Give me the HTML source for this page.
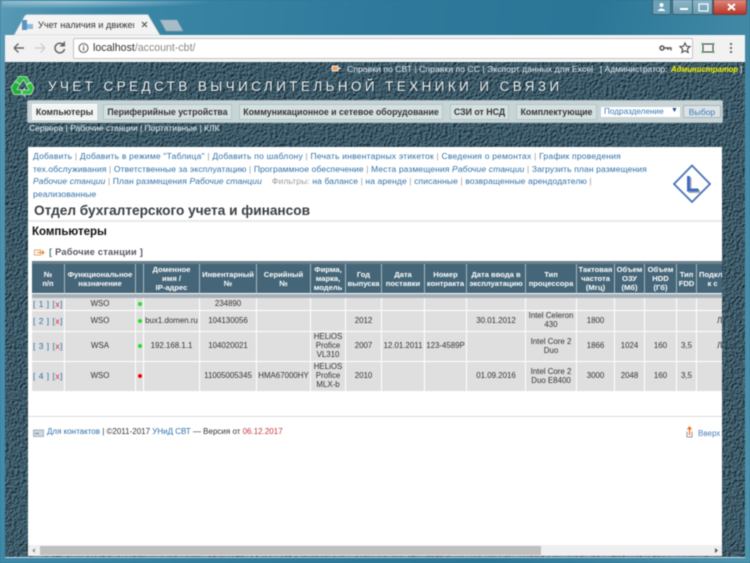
<!DOCTYPE html>
<html><head><meta charset="utf-8"><style>
html,body{margin:0;padding:0;width:750px;height:563px;overflow:hidden;background:#2b6d8c}
*{box-sizing:border-box}
#r{position:absolute;left:0;top:0;width:750px;height:563px;overflow:hidden;font-family:"Liberation Sans",sans-serif;filter:blur(.4px)}
.a{position:absolute;white-space:nowrap}
.l{color:#2f70a8}.s{color:#999}
table{border-collapse:separate;border-spacing:0;table-layout:fixed;position:absolute;left:32px;top:261px;width:690px;font-size:7.9px;color:#333;text-align:center}
td,th{padding:0;overflow:hidden;border-right:1px solid #fff;border-bottom:1px solid #fff;line-height:8.8px;white-space:nowrap}
td{background:#dfdfdf}
td:first-child{font-size:8.500px;letter-spacing:.5px}
th{background:#456678;color:#fff;font-weight:bold;font-size:7.6px;height:30px;line-height:9px;border-right:1px solid #a8b8c0}
.st td{background:#6b7f8c;height:3px;border:0;line-height:0;font-size:0}
.dot{display:inline-block;width:4px;height:4px;border-radius:50%}
.btn{position:absolute;top:104px;height:16px;background:#d6e0e0;border:1px solid #a9c8c8;font:bold 8.8px/14px "Liberation Sans",sans-serif;color:#333;text-align:center;white-space:nowrap}
</style></head><body><div id="r">
<div class="a" style="left:0;top:0;width:750px;height:563px;background:linear-gradient(100deg,#5a9ab5 0%,#3d88a8 12%,#2f7a9c 45%,#2b7697 70%,#4f94ae 100%)"></div>
<div class="a" style="left:2px;top:1px;width:746px;height:36px;background:radial-gradient(ellipse at 60px 0,#a9cbd8,transparent 150px)"></div>

<svg class="a" style="left:0;top:0" width="750" height="40">
<path d="M14 35 L24 17 Q25 14.500 28 14.500 L148 14.500 L160 35 Z" fill="#f3f3f3" stroke="#9fb4bd" stroke-width=".6"/>
<path d="M160 20 L177 20 L183 31 L166 31 Z" fill="#a8bcc8" stroke="#8ba2ae" stroke-width=".5"/>
<rect x="22" y="20" width="5" height="10" fill="#5b94bf"/><rect x="27" y="24" width="6" height="5" fill="#8ebbd9"/>
<path d="M142 22l5 5m0-5l-5 5" stroke="#555" stroke-width="1.200"/>
</svg>
<div class="a" style="left:38px;top:19px;font-size:9.200px;line-height:12px;color:#333;width:96px;overflow:hidden">Учет наличия и движен</div>

<div class="a" style="left:652px;top:0;width:19px;height:15px;background:#6ba0b5;border:1px solid #3c5f70;border-top:0;border-radius:0 0 3px 3px"></div>
<div class="a" style="left:672px;top:0;width:21px;height:15px;background:linear-gradient(#8fb8c8,#6a9cb0);border:1px solid #3c5f70;border-top:0;border-radius:0 0 0 3px"></div>
<div class="a" style="left:693px;top:0;width:20px;height:15px;background:linear-gradient(#8fb8c8,#6a9cb0);border:1px solid #3c5f70;border-width:0 1px 1px 0"></div>
<div class="a" style="left:713px;top:0;width:34px;height:15px;background:linear-gradient(#e0867a,#b8362b);border:1px solid #7a3a3a;border-top:0;border-radius:0 0 3px 0"></div>
<svg class="a" style="left:652px;top:0" width="96" height="15">
<circle cx="9.500" cy="5" r="2" fill="#fff"/><path d="M5.500 11q4-5 8 0z" fill="#fff"/>
<rect x="28" y="8" width="8" height="2" fill="#fff"/>
<rect x="47" y="4" width="9" height="7" fill="none" stroke="#fff" stroke-width="1.200"/>
<path d="M76 4l7 6m0-6l-7 6" stroke="#fff" stroke-width="2"/>
</svg>

<div class="a" style="left:5px;top:35px;width:740px;height:27px;background:#f2f2f2"></div>
<div class="a" style="left:73px;top:38px;width:620px;height:21px;background:#fff;border:1px solid #c4c4c4;border-radius:2px"></div>
<svg class="a" style="left:5px;top:35px" width="740" height="27">
<path d="M9 13H19M9 13l4.500-4.500M9 13l4.500 4.500" fill="none" stroke="#666" stroke-width="1.400"/>
<path d="M40 13H30M40 13l-4.500-4.500M40 13l-4.500 4.500" fill="none" stroke="#cfcfcf" stroke-width="1.400"/>
<path d="M58.500 10a4.800 4.800 0 1 0 1 4" fill="none" stroke="#666" stroke-width="1.500"/><path d="M60 6v5.500h-5.500z" fill="#666"/>
<circle cx="78.500" cy="13" r="4.500" fill="none" stroke="#666" stroke-width="1.100"/><rect x="78" y="12" width="1.200" height="3.500" fill="#666"/><rect x="78" y="10" width="1.200" height="1.200" fill="#666"/>
<circle cx="657" cy="13" r="2" fill="none" stroke="#555" stroke-width="1.500"/><path d="M659 13h7v2.500M663 13v2" fill="none" stroke="#555" stroke-width="1.400"/>
<path d="M680 8l1.500 3.200 3.500.4-2.600 2.400.7 3.500-3.100-1.800-3.100 1.800.7-3.500-2.600-2.400 3.500-.4z" fill="none" stroke="#555" stroke-width="1.200"/>
<rect x="698" y="9" width="10" height="8" fill="none" stroke="#444" stroke-width="1.100"/>
<path d="M696.500 8h2v2h-2zM707.500 8h2v2h-2zM696.500 16h2v2h-2zM707.500 16h2v2h-2z" fill="#4caf50"/>
<path d="M725 8h2v2h-2zM725 12h2v2h-2zM725 16h2v2h-2z" fill="#666"/>
</svg>
<div class="a" style="left:93px;top:41px;font-size:10.600px;line-height:14px;color:#333">localhost<span style="color:#888">/account-cbt/</span></div>

<svg class="a" style="left:5px;top:62px" width="740" height="496">
<filter id="t" x="0" y="0" width="100%" height="100%" color-interpolation-filters="sRGB"><feTurbulence type="fractalNoise" baseFrequency=".36" numOctaves="3" seed="4"/><feDiffuseLighting surfaceScale="1.400" lighting-color="#567f93" diffuseConstant=".95"><feDistantLight azimuth="225" elevation="52"/></feDiffuseLighting></filter>
<rect width="740" height="496" filter="url(#t)"/>
</svg>
<div class="a" style="left:5px;top:557px;width:740px;height:1px;background:#c9dbe2"></div>

<svg class="a" style="left:331px;top:65px" width="11" height="8"><rect x="1" y="1" width="6" height="5" fill="#f0a060" stroke="#fff" stroke-width=".8"/><path d="M7 3.500h3" stroke="#fff"/></svg>
<div class="a" style="left:347px;top:64px;font-size:8.700px;line-height:11px;color:#e6eef2">Справки по СВТ | Справки по СС | Экспорт данных для Excel</div>
<div class="a" style="left:600px;top:64px;font-size:8.400px;line-height:11px;color:#e6eef2">[ Администратор:</div>
<div class="a" style="left:671px;top:64px;font-size:7.800px;line-height:11px;color:#f4f400;font-weight:bold;font-style:italic">Администратор</div>
<div class="a" style="left:740px;top:64px;font-size:8.400px;line-height:11px;color:#e6eef2">]</div>

<svg class="a" style="left:9px;top:74px" width="27" height="25" viewBox="0 0 27 25">
<path d="M9.500 2.500h8l3.500 6-3.500 2-3-5-3 5-5-2.500z" fill="#2fc04a" stroke="#d8f0d8" stroke-width=".7"/>
<path d="M2 14l4-6.500 5 2.500-3 5.500h4.500v5H5z" fill="#1fb03a" stroke="#d8f0d8" stroke-width=".7"/>
<path d="M25 14l-3-5.500-5 2.500 3 5h-4.500v-2l-3 4.500 3 4v-2H22z" fill="#2fc04a" stroke="#d8f0d8" stroke-width=".7"/>
</svg>

<div class="a" style="left:48px;top:78px;font-size:13.500px;line-height:18px;letter-spacing:3.400px;color:#eef0f0;text-shadow:1px 1px 0 #1d3442">УЧЕТ СРЕДСТВ ВЫЧИСЛИТЕЛЬНОЙ ТЕХНИКИ И СВЯЗИ</div>

<div class="a" style="left:27px;top:100px;width:696px;height:23px;background:#c9d4d6;border:1px solid #aebcc0;border-radius:2px"></div>
<div class="btn" style="left:32px;width:65px;background:#f2f4f4;border-color:#fff">Компьютеры</div>
<div class="btn" style="left:103px;width:129px">Периферийные устройства</div>
<div class="btn" style="left:239px;width:204px">Коммуникационное и сетевое оборудование</div>
<div class="btn" style="left:450px;width:59px">СЗИ от НСД</div>
<div class="btn" style="left:516px;width:81px">Комплектующие</div>
<div class="a" style="left:601px;top:107px;width:79px;height:10px;background:#fff;font-size:8.200px;line-height:10px;color:#3a7ab8;padding-left:3px">Подразделение<span style="position:absolute;left:70px;top:-1px;font-size:7px;color:#234f9a">▼</span></div>
<div class="a" style="left:683px;top:105px;width:38px;height:13px;background:#dce3e6;border:1px solid #a8b4ba;border-radius:2px;font-size:8.600px;line-height:12px;text-align:center;color:#3a7ab8">Выбор</div>
<div class="a" style="left:29px;top:122px;font-size:8.500px;line-height:12px;color:#eef4f6">Сервера | Рабочие станции | Портативные | КЛК</div>

<div class="a" style="left:28px;top:147px;width:694px;height:398px;background:#fff"></div>
<div class="a" style="left:33px;top:150px;font-size:8.500px;line-height:12.500px;letter-spacing:.12px;color:#999"><span style="letter-spacing:.22px"><span class="l">Добавить</span> | <span class="l">Добавить в режиме "Таблица"</span> | <span class="l">Добавить по шаблону</span> | <span class="l">Печать инвентарных этикеток</span> | <span class="l">Сведения о ремонтах</span> | <span class="l">График проведения</span></span><br>
<span class="l">тех.обслуживания</span> | <span class="l">Ответственные за эксплуатацию</span> | <span class="l">Программное обеспечение</span> | <span class="l">Места размещения <i>Рабочие станции</i></span> | <span class="l">Загрузить план размещения</span><br>
<span class="l"><i>Рабочие станции</i></span> | <span class="l">План размещения <i>Рабочие станции</i></span> &nbsp; &nbsp;Фильтры: <span class="l">на балансе</span> | <span class="l">на аренде</span> | <span class="l">списанные</span> | <span class="l">возвращенные арендодателю</span> |<br>
<span class="l">реализованные</span></div>
<svg class="a" style="left:672px;top:164px" width="40" height="40" viewBox="0 0 40 40">
<path d="M20 1.500L38 20 20 38 2 20z" fill="#fff" stroke="#4a72b8" stroke-width="1.800"/>
<path d="M16.500 12v14h10" fill="none" stroke="#aaa" stroke-width="3" transform="translate(1.500 1.500)"/>
<path d="M16.500 12v14h10" fill="none" stroke="#3f6bc5" stroke-width="3"/>
</svg>
<div class="a" style="left:34px;top:202px;font-size:13.650px;font-weight:bold;line-height:17px;color:#3a3f44">Отдел бухгалтерского учета и финансов</div>
<div class="a" style="left:28px;top:220px;width:694px;height:2px;background:#e8e8e8"></div>
<div class="a" style="left:32px;top:225px;font-size:11.500px;font-weight:bold;line-height:15px;color:#111">Компьютеры</div>
<svg class="a" style="left:34px;top:249px" width="12" height="8"><rect x=".5" y="1" width="6" height="5" fill="none" stroke="#d8a878"/><path d="M3 3.500h7M8 1.500l2 2-2 2" fill="none" stroke="#f08020" stroke-width="1.100"/></svg>
<div class="a" style="left:49px;top:246px;font-size:9.200px;font-weight:bold;line-height:13px;letter-spacing:.25px;color:#556"><span style="color:#4f7f8f">[</span> Рабочие станции <span>]</span></div>

<div class="a" style="left:32px;top:261px;width:690px;height:132px;overflow:hidden">
<table style="left:0;top:0;width:710px">
<colgroup><col style="width:33px"><col style="width:71px"><col style="width:8px"><col style="width:56px"><col style="width:57px"><col style="width:54px"><col style="width:35px"><col style="width:36px"><col style="width:43px"><col style="width:42px"><col style="width:59px"><col style="width:51px"><col style="width:38px"><col style="width:30px"><col style="width:32px"><col style="width:20px"><col style="width:45px"></colgroup>
<tr class="st"><td colspan="17"></td></tr>
<tr><th>№<br>п/п</th><th>Функциональное<br>назначение</th><th></th><th>Доменное<br>имя /<br>IP-адрес</th><th>Инвентарный<br>№</th><th>Серийный<br>№</th><th>Фирма,<br>марка,<br>модель</th><th>Год<br>выпуска</th><th>Дата<br>поставки</th><th>Номер<br>контракта</th><th>Дата ввода в<br>эксплуатацию</th><th>Тип<br>процессора</th><th>Тактовая<br>частота<br>(Мгц)</th><th>Объем<br>ОЗУ<br>(Мб)</th><th>Объем<br>HDD<br>(Гб)</th><th>Тип<br>FDD</th><th style="text-align:left;padding-left:2px">Подкл<br>&nbsp; &nbsp; к с</th></tr>
<tr class="st"><td colspan="17" style="height:4px;background:#a4b0b8;border-bottom:0"></td></tr>
<tr style="height:13px"><td><span class="l">[ 1 ]</span> <span class="l">[</span><span style="color:#d23">x</span><span class="l">]</span></td><td>WSO</td><td><i class="dot" style="background:#1fe01f"></i></td><td></td><td>234890</td><td></td><td></td><td></td><td></td><td></td><td></td><td></td><td></td><td></td><td></td><td></td><td></td></tr>
<tr style="height:21px"><td><span class="l">[ 2 ]</span> <span class="l">[</span><span style="color:#d23">x</span><span class="l">]</span></td><td>WSO</td><td><i class="dot" style="background:#1fe01f"></i></td><td>bux1.domen.ru</td><td>104130056</td><td></td><td></td><td>2012</td><td></td><td></td><td>30.01.2012</td><td>Intel Celeron<br>430</td><td>1800</td><td></td><td></td><td></td><td style="text-align:left;padding-left:20px">Л</td></tr>
<tr style="height:30px"><td><span class="l">[ 3 ]</span> <span class="l">[</span><span style="color:#d23">x</span><span class="l">]</span></td><td>WSA</td><td><i class="dot" style="background:#1fe01f"></i></td><td>192.168.1.1</td><td>104020021</td><td></td><td>HELiOS<br>Profice<br>VL310</td><td>2007</td><td>12.01.2011</td><td>123-4589Р</td><td></td><td>Intel Core 2<br>Duo</td><td>1866</td><td>1024</td><td>160</td><td>3,5</td><td style="text-align:left;padding-left:20px">Л</td></tr>
<tr style="height:30px"><td><span class="l">[ 4 ]</span> <span class="l">[</span><span style="color:#d23">x</span><span class="l">]</span></td><td>WSO</td><td><i class="dot" style="background:#f00000"></i></td><td></td><td>11005005345</td><td>HMA67000HY</td><td>HELiOS<br>Profice<br>MLX-b</td><td>2010</td><td></td><td></td><td>01.09.2016</td><td>Intel Core 2<br>Duo E8400</td><td>3000</td><td>2048</td><td>160</td><td>3,5</td><td></td></tr>
</table>
</div>

<div class="a" style="left:28px;top:416px;width:694px;height:1px;background:#ddd"></div>
<svg class="a" style="left:33px;top:429px" width="11" height="8"><rect x=".5" y="1" width="10" height="6.500" fill="#cfd8e0" stroke="#8a98a8" stroke-width=".7"/><path d="M2 4.500h4" stroke="#5c86b0"/></svg>
<div class="a" style="left:47px;top:426px;font-size:8px;line-height:12px;color:#333"><span class="l">Для контактов</span> | ©2011-2017 <span class="l">УНиД СВТ</span> — Версия от <span style="color:#c8343c">06.12.2017</span></div>
<svg class="a" style="left:685px;top:426px" width="10" height="12"><path d="M2 5.500v5.500h5V5.500" fill="none" stroke="#8a98a8"/><path d="M4.500 9V1M2.500 3.500l2-2.500 2 2.500" fill="none" stroke="#f06a10" stroke-width="1.200"/></svg>
<div class="a" style="left:698px;top:428px;font-size:8px;line-height:12px;color:#4a80bb">Вверх</div>

<div class="a" style="left:28px;top:545px;width:694px;height:11px;background:#efefef"></div>
<div class="a" style="left:40px;top:546px;width:501px;height:9px;background:#bfbfbf"></div>
<svg class="a" style="left:28px;top:545px" width="694" height="11"><path d="M7 3v5L4 5.500z" fill="#999"/><path d="M687 3v5l3-2.500z" fill="#555"/></svg>
</div></body></html>
